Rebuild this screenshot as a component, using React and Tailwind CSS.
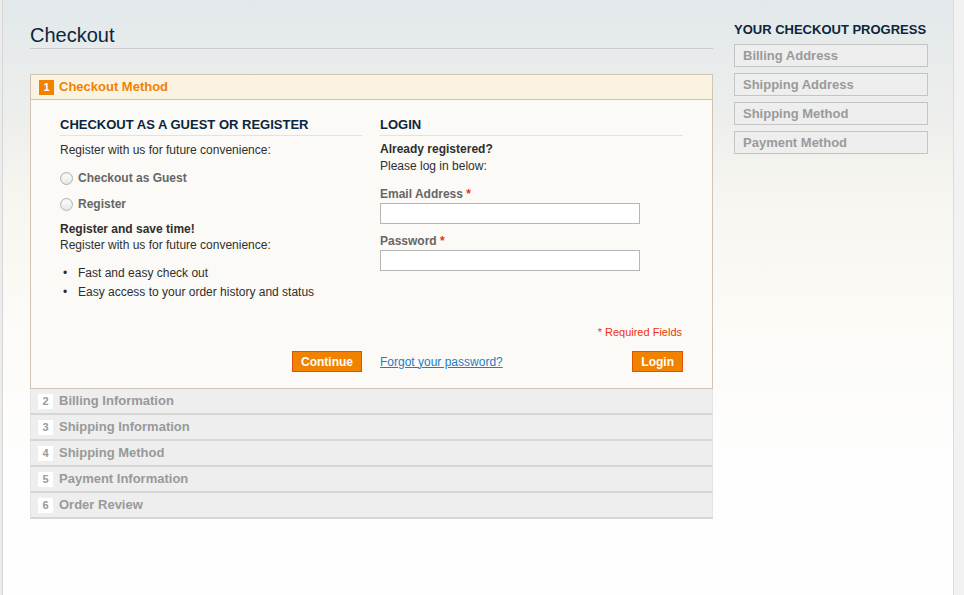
import React from 'react'

const font = { fontFamily: '"Liberation Sans", Arial, Helvetica, sans-serif' }

const steps = [
  { n: 2, label: 'Billing Information' },
  { n: 3, label: 'Shipping Information' },
  { n: 4, label: 'Shipping Method' },
  { n: 5, label: 'Payment Information' },
  { n: 6, label: 'Order Review' },
]

const progress = ['Billing Address', 'Shipping Address', 'Shipping Method', 'Payment Method']

const Radio = ({ label }) => (
  <label className="flex h-[26px] items-center">
    <span className="h-[13px] w-[13px] rounded-full border border-[#b3b3b3] bg-[linear-gradient(180deg,#ffffff,#e6e6e6)] shadow-[inset_0_1px_1px_rgba(0,0,0,0.08)]" />
    <span className="ml-[5px] text-[12px] font-bold text-[#666]">{label}</span>
  </label>
)

const Button = ({ children }) => (
  <button className="flex h-[21px] items-center border border-[#de5400] bg-[#f18200] px-[8px] text-[12px] font-bold leading-[18px] text-white">
    {children}
  </button>
)

const Field = ({ label, className }) => (
  <div className={className}>
    <div className="text-[12px] font-bold leading-[16px] text-[#666]">
      {label} <span className="text-[#eb340a]">*</span>
    </div>
    <input
      type="text"
      className="mt-[1px] block h-[21px] w-[260px] border border-[#b6b6b6] bg-white"
    />
  </div>
)

export default function App() {
  return (
    <div style={font} className="flex h-[595px] w-[964px] overflow-hidden bg-white text-[#2f2f2f]">
      <div className="w-[3px] border-r border-[#d6d6d6] bg-[#ececec]" />
      <div className="flex w-[950px] bg-[linear-gradient(180deg,#e2e8eb_0%,#eceeec_18%,#f8f6f0_35%,#fcfbf7_55%,#fefefe_80%)] pl-[27px]">
        {/* main column */}
        <div className="w-[683px]">
          <h1 className="border-b border-[#c8ccd0] pb-[0px] pt-[23px] text-[20px] leading-[25px] text-[#0a263d]">
            Checkout
          </h1>

          <div className="mt-[25px] border border-[#d0c4b4]">
            <div className="flex h-[25px] items-center border-b border-[#d0c4b4] bg-[#fbf3e2] pl-[8px]">
              <span className="flex h-[15px] w-[15px] items-center justify-center bg-[#f18200] text-[11px] font-bold text-white">
                1
              </span>
              <span className="ml-[5px] text-[13px] font-bold text-[#f18200]">Checkout Method</span>
            </div>

            <div className="flex h-[288px] bg-[#fbfaf6] pb-[16px] pl-[29px] pr-[29px] pt-[17px]">
              {/* guest / register */}
              <div className="flex w-[302px] flex-col">
                <h2 className="border-b border-[#e2e2de] pb-[2px] text-[13px] font-bold uppercase leading-[16px] text-[#0a263d]">
                  Checkout as a Guest or Register
                </h2>
                <p className="mt-[6px] text-[12px] leading-[16px]">Register with us for future convenience:</p>
                <div className="mt-[7px]">
                  <Radio label="Checkout as Guest" />
                  <Radio label="Register" />
                </div>
                <p className="mt-[4px] text-[12px] font-bold leading-[16px]">Register and save time!</p>
                <p className="text-[12px] leading-[16px]">Register with us for future convenience:</p>
                <ul className="mt-[11px] text-[12px] leading-[19px]">
                  <li className="flex">
                    <span className="w-[18px] pl-[3px]">•</span>Fast and easy check out
                  </li>
                  <li className="flex">
                    <span className="w-[18px] pl-[3px]">•</span>Easy access to your order history and status
                  </li>
                </ul>
                <div className="mt-auto flex justify-end">
                  <Button>Continue</Button>
                </div>
              </div>

              {/* login */}
              <div className="ml-[18px] flex w-[303px] flex-col">
                <h2 className="border-b border-[#e2e2de] pb-[2px] text-[13px] font-bold uppercase leading-[16px] text-[#0a263d]">
                  Login
                </h2>
                <p className="mt-[5px] text-[12px] font-bold leading-[17px]">Already registered?</p>
                <p className="text-[12px] leading-[17px]">Please log in below:</p>
                <Field label="Email Address" className="mt-[11px]" />
                <Field label="Password" className="mt-[9px]" />
                <div className="mt-auto pr-[1px] text-right text-[11px] leading-[14px] text-[#eb340a]">
                  * Required Fields
                </div>
                <div className="mt-[12px] flex items-center justify-between">
                  <a href="#" className="text-[12px] text-[#1e7ec8] underline">
                    Forgot your password?
                  </a>
                  <Button>Login</Button>
                </div>
              </div>
            </div>
          </div>

          {steps.map((s) => (
            <div
              key={s.n}
              className="flex h-[26px] items-center border-b-2 border-x border-x-[#e4e4e4] border-b-[#d6d6d6] bg-[#eeeeee] pl-[7px]"
            >
              <span className="flex h-[15px] w-[15px] items-center justify-center bg-white text-[11px] font-bold text-[#999]">
                {s.n}
              </span>
              <span className="ml-[6px] text-[13px] font-bold text-[#999]">{s.label}</span>
            </div>
          ))}
        </div>

        {/* sidebar */}
        <div className="ml-[21px] w-[194px] pt-[22px]">
          <h3 className="text-[13px] font-bold uppercase leading-[16px] text-[#0a263d]">Your Checkout Progress</h3>
          <div className="mt-[6px] flex flex-col gap-[6px]">
            {progress.map((p) => (
              <div
                key={p}
                className="flex h-[23px] items-center border border-[#c4c4c4] bg-[#eeeeee] pl-[8px] text-[13px] font-bold text-[#9a9a9a]"
              >
                {p}
              </div>
            ))}
          </div>
        </div>
      </div>
      <div className="w-[11px] border-l border-[#dcdcdc] bg-[#f2f2f2]" />
    </div>
  )
}
